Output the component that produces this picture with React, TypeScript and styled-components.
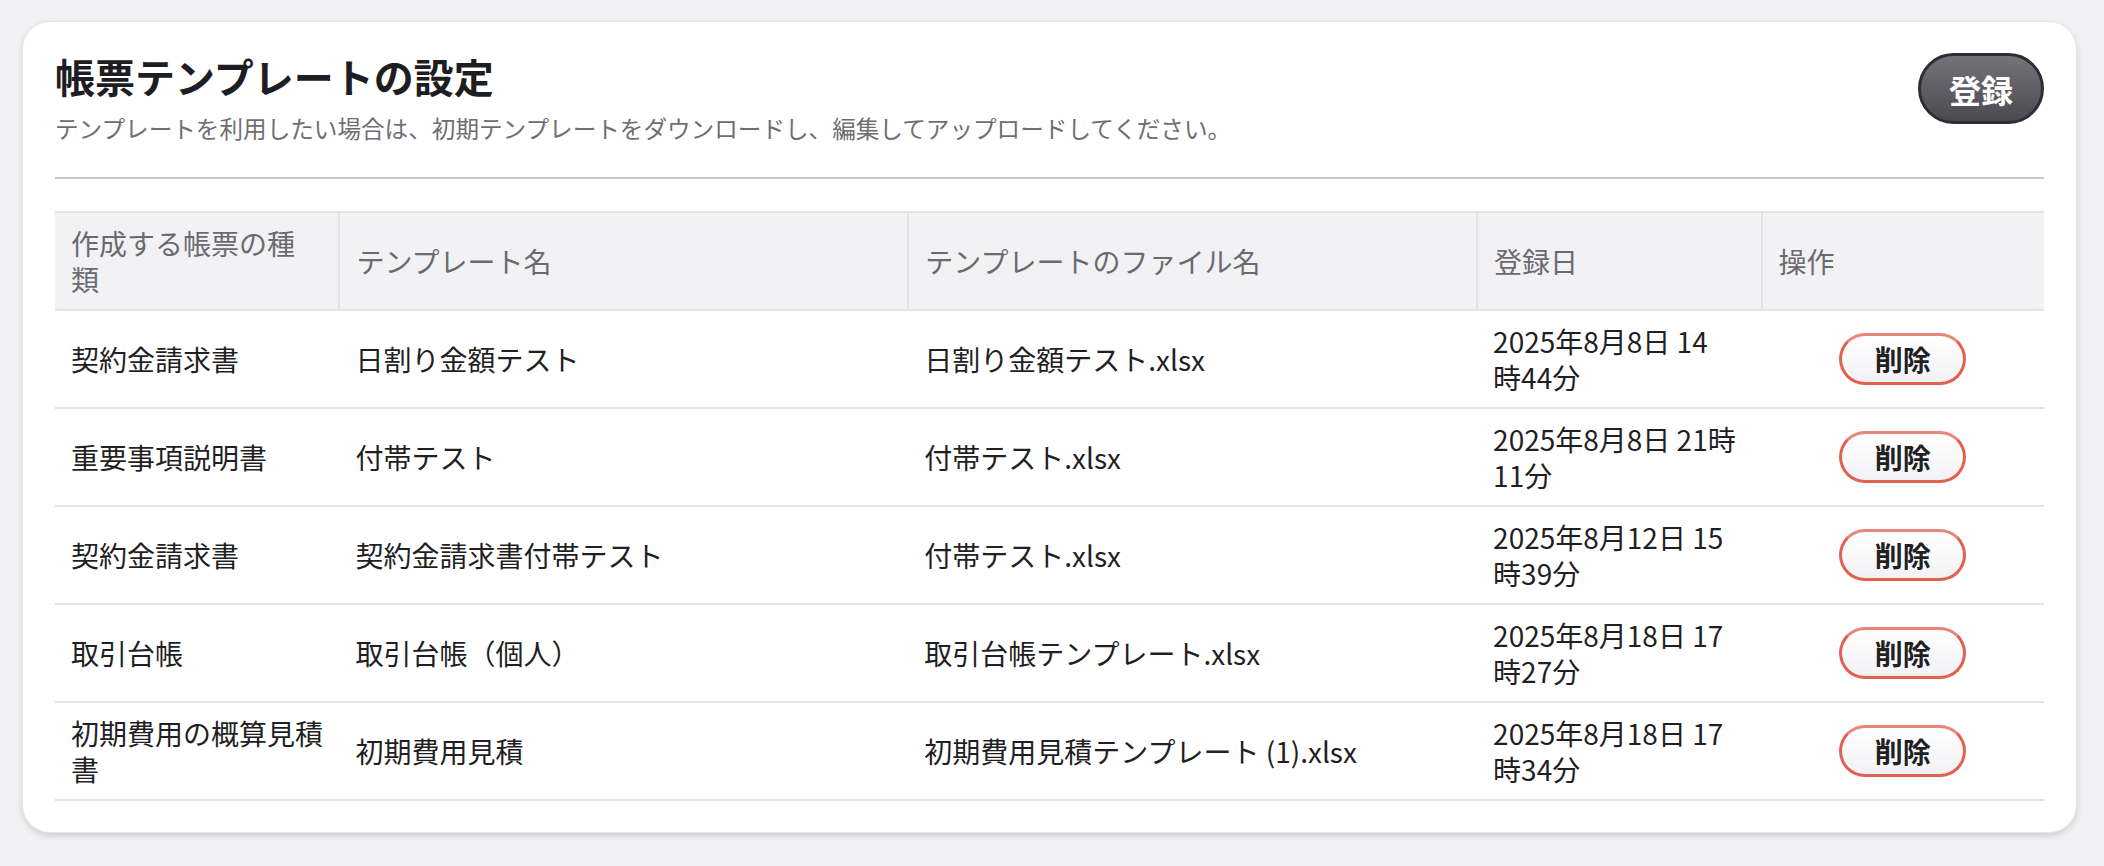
import React from "react";
import styled, { createGlobalStyle } from "styled-components";

type Template = {
  kind: string;
  name: string;
  file: string;
  date: string[];
};

const templates: Template[] = [
  { kind: "契約金請求書", name: "日割り金額テスト", file: "日割り金額テスト.xlsx", date: ["2025年8月8日 14", "時44分"] },
  { kind: "重要事項説明書", name: "付帯テスト", file: "付帯テスト.xlsx", date: ["2025年8月8日 21時", "11分"] },
  { kind: "契約金請求書", name: "契約金請求書付帯テスト", file: "付帯テスト.xlsx", date: ["2025年8月12日 15", "時39分"] },
  { kind: "取引台帳", name: "取引台帳（個人）", file: "取引台帳テンプレート.xlsx", date: ["2025年8月18日 17", "時27分"] },
  { kind: "初期費用の概算見積書", name: "初期費用見積", file: "初期費用見積テンプレート (1).xlsx", date: ["2025年8月18日 17", "時34分"] },
];

const GlobalStyle = createGlobalStyle`
  html, body {
    margin: 0;
    background: #f2f2f4;
    font-family: "Noto Sans CJK JP", "Noto Sans", sans-serif;
    color: #1f1f24;
  }
`;

function App() {
  return (
    <Page>
      <GlobalStyle />
      <Card>
        <Header>
          <div>
            <Title>帳票テンプレートの設定</Title>
            <Lead>
              テンプレートを利用したい場合は、初期テンプレートをダウンロードし、編集してアップロードしてください。
            </Lead>
          </div>
          <RegisterButton>登録</RegisterButton>
        </Header>
        <Divider />
        <Table>
          <colgroup>
            <col style={{ width: "14.3%" }} />
            <col style={{ width: "28.6%" }} />
            <col style={{ width: "28.6%" }} />
            <col style={{ width: "14.3%" }} />
            <col style={{ width: "14.2%" }} />
          </colgroup>
          <thead>
            <tr>
              <Th>作成する帳票の種類</Th>
              <Th>テンプレート名</Th>
              <Th>テンプレートのファイル名</Th>
              <Th>登録日</Th>
              <Th>操作</Th>
            </tr>
          </thead>
          <tbody>
            {templates.map((t, i) => (
              <tr key={i}>
                <Td>{t.kind}</Td>
                <Td>{t.name}</Td>
                <Td>{t.file}</Td>
                <Td>
                  {t.date[0]}
                  <br />
                  {t.date[1]}
                </Td>
                <Td $center>
                  <DeleteButton>削除</DeleteButton>
                </Td>
              </tr>
            ))}
          </tbody>
        </Table>
      </Card>
    </Page>
  );
}

const Page = styled.div`
  padding: 21px 27px 32px 22px;
`;

const Card = styled.div`
  background: #fff;
  border: 1px solid #e6e6e8;
  border-radius: 28px;
  box-shadow: 0 3px 6px rgba(0, 0, 0, 0.14);
  padding: 30px 32px 31px 32px;
`;

const Header = styled.div`
  display: flex;
  justify-content: space-between;
  align-items: flex-start;
`;

const Title = styled.h1`
  margin: 0;
  font-size: 40px;
  line-height: 48px;
  font-weight: 700;
  color: #1d1d22;
`;

const Lead = styled.p`
  margin: 11px 0 0;
  font-size: 23.6px;
  line-height: 34px;
  color: #6e6e74;
`;

const RegisterButton = styled.button`
  margin-top: 1px;
  width: 126px;
  height: 71px;
  border-radius: 36px;
  border: 3px solid #2e2d33;
  background: linear-gradient(#74737a, #4b4a51);
  color: #fff;
  font-family: inherit;
  font-size: 32px;
  font-weight: 700;
  cursor: pointer;
`;

const Divider = styled.hr`
  margin: 32px 0 32px;
  border: none;
  height: 2px;
  background: #c9c9cb;
`;

const Table = styled.table`
  width: 100%;
  table-layout: fixed;
  border-collapse: collapse;
  font-size: 28px;
  line-height: 36px;
`;

const Th = styled.th`
  text-align: left;
  font-weight: 400;
  color: #6a6a70;
  background: #f2f2f4;
  padding: 12px 16px;
  border-top: 2px solid #e3e3e5;
  border-bottom: 2px solid #e3e3e5;
  & + & {
    border-left: 2px solid #e3e3e5;
  }
`;

const Td = styled.td<{ $center?: boolean }>`
  padding: 12px 16px;
  border-bottom: 2px solid #e3e3e5;
  text-align: ${(p) => (p.$center ? "center" : "left")};
  vertical-align: middle;
  color: #1f1f24;
`;

const DeleteButton = styled.button`
  width: 127px;
  height: 52px;
  border-radius: 26px;
  border: 3px solid #e2614f;
  border-top-color: #e8867a;
  background: linear-gradient(#ffffff, #f2f2f5);
  color: #1f1f24;
  font-family: inherit;
  font-size: 28px;
  font-weight: 700;
  line-height: 1;
  cursor: pointer;
`;

export default App;
